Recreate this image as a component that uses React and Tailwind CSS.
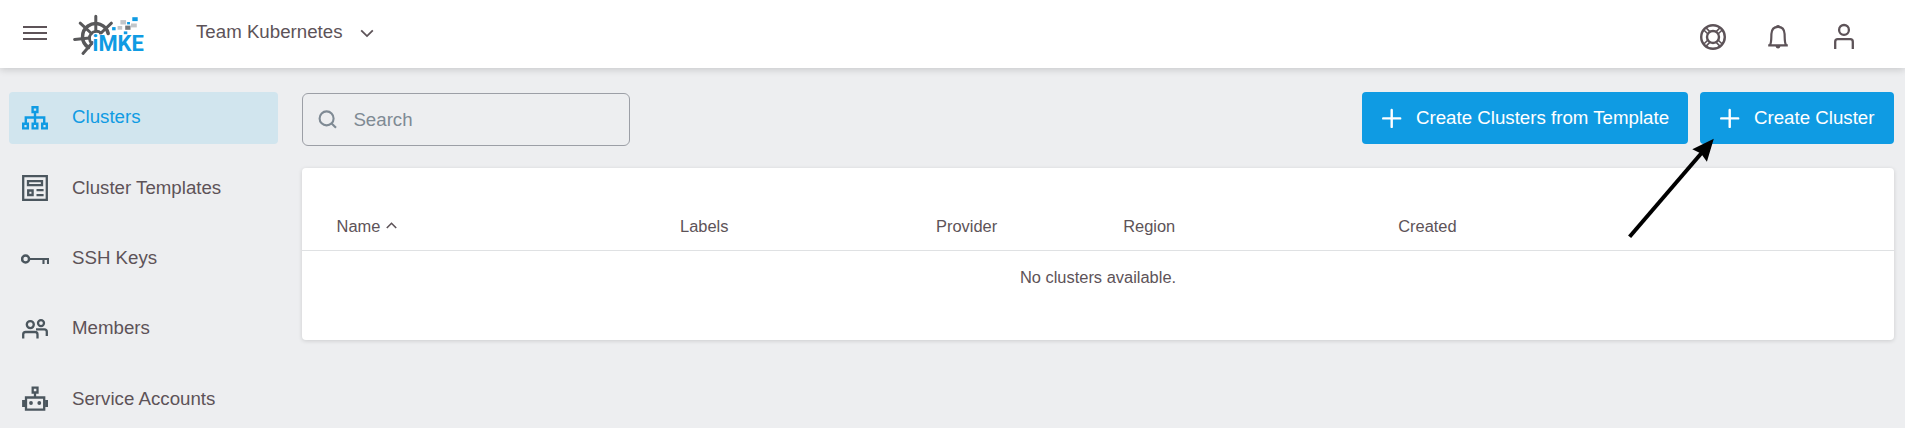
import React from "react";

const stroke = { fill: "none", stroke: "currentColor" };

function HelmLogo() {
  return (
    <svg className="h-[44px] w-[74px] shrink-0" viewBox="72 13 74 44">
      <g fill="none" stroke="#58585a" strokeLinecap="round">
        <path d="M108.2 33.5A13 13 0 1 0 88.5 47.5" strokeWidth="3.5" />
        <path d="M91.8 43.5A6 6 0 1 1 101 33" strokeWidth="2.8" />
        <path
          d="M95.8 16.2V31M80.2 23.2L91.5 33.5M111.4 23.2L100.5 33.5M74.6 39.4L89.5 38M83 53.4L92.5 42.5"
          strokeWidth="3"
        />
      </g>
      <rect x="132.3" y="17.2" width="5.4" height="3.9" fill="#0f9be3" />
      <rect x="120.4" y="20.1" width="5.7" height="4.4" fill="#c3c6c9" />
      <rect x="127.1" y="22" width="2.9" height="2.4" fill="#0f9be3" />
      <rect x="131" y="23.5" width="5.8" height="3.9" fill="#c3c6c9" />
      <rect x="117.6" y="26" width="4.6" height="3.7" fill="#c3c6c9" />
      <rect x="125.2" y="25.6" width="5.3" height="4.2" fill="#77797c" />
      <rect x="112.1" y="27.1" width="3.5" height="3.2" fill="#0f9be3" />
      <rect x="123.8" y="31.4" width="3.5" height="2.8" fill="#0f9be3" />
      <text
        x="92.6"
        y="51"
        textLength="51.2"
        lengthAdjust="spacingAndGlyphs"
        fill="#0f9be3"
        stroke="#fff"
        strokeWidth="1"
        paintOrder="stroke"
        className="font-['Roboto',sans-serif] text-[21.5px] font-bold"
      >
        iMKE
      </text>
    </svg>
  );
}

function ClustersIcon() {
  return (
    <svg className="size-[26px]" viewBox="0 0 26 26" {...stroke} strokeWidth="2.4">
      <path d="M10.6 2.2h4.8v4.8h-4.8zM1.2 18.8h4.6v4.6H1.2zM10.7 18.8h4.6v4.6h-4.6zM20.2 18.8h4.6v4.6h-4.6zM13 7v11.8M3.8 18.8v-6.3h18.4v6.3" />
    </svg>
  );
}

function TemplatesIcon() {
  return (
    <svg className="size-[26px]" viewBox="0 0 26 26" {...stroke} strokeWidth="2.3">
      <path d="M1.2 1.2h23.6v23.6H1.2zM6 6.2h14v4H6zM6.2 15.5h4.4v4.5H6.2zM14.5 15.2H21.6M14.5 20.2H21.6" />
    </svg>
  );
}

function KeyIcon() {
  return (
    <svg className="size-[28px] -mx-px" viewBox="0 0 28 28" {...stroke} strokeWidth="2.1">
      <circle cx="4.6" cy="14" r="3.5" strokeWidth="2.5" />
      <path d="M8.5 14H27v5M22.5 14v5" />
    </svg>
  );
}

function MembersIcon() {
  return (
    <svg className="size-[26px]" viewBox="0 0 26 26" {...stroke} strokeWidth="2.3">
      <circle cx="8.3" cy="8.6" r="3.5" />
      <circle cx="19" cy="7.1" r="3" />
      <path d="M1.2 22.5V18.5Q1.2 16 3.7 16H13Q15.5 16 15.5 18.5V22.5M14 13.3H22.3Q24.8 13.3 24.8 15.8V20" />
    </svg>
  );
}

function RobotIcon() {
  return (
    <svg className="size-[26px]" viewBox="0 0 26 26" {...stroke} strokeWidth="2.3">
      <path d="M10.7 1.7h4.8v4.8h-4.8zM13 6.5v5M4 11.5h18.2v12.2H4z" />
      <path d="M1.6 14v7M24.6 14v7" strokeWidth="3" />
      <circle cx="9" cy="17" r="1.9" fill="currentColor" stroke="none" />
      <circle cx="17.3" cy="17" r="1.9" fill="currentColor" stroke="none" />
    </svg>
  );
}

function PlusIcon() {
  return (
    <svg className="size-[20px] shrink-0" viewBox="0 0 20 20" {...stroke} strokeWidth="2.4">
      <path d="M1.2 10.4H18.2M9.7 2V19" strokeLinecap="round" />
    </svg>
  );
}

const navItems = [
  { label: "Clusters", Icon: ClustersIcon, active: true },
  { label: "Cluster Templates", Icon: TemplatesIcon },
  { label: "SSH Keys", Icon: KeyIcon },
  { label: "Members", Icon: MembersIcon },
  { label: "Service Accounts", Icon: RobotIcon },
];

function Header() {
  return (
    <header className="relative z-10 flex h-[68px] shrink-0 items-start bg-white pr-[47px] shadow-[0_2px_7px_rgba(0,0,0,0.15)]">
      <svg className="mt-[25px] ml-[23px] h-[16px] w-[24px] shrink-0" viewBox="0 0 24 16" {...stroke} strokeWidth="2.2">
        <path d="M0 2H24M0 8H24M0 14H24" />
      </svg>
      <div className="mt-[13px] ml-[25px]">
        <HelmLogo />
      </div>
      <button className="mt-[18px] ml-[50px] flex h-[28px] items-center">
        <span className="w-[148px] text-left">Team Kubernetes</span>
        <svg className="mt-[2px] ml-[16px] h-[9px] w-[14px]" viewBox="0 0 14 9" {...stroke} strokeWidth="1.8">
          <path d="M1.2 1.3L7 7.1L12.8 1.3" />
        </svg>
      </button>
      <div className="mt-[23px] ml-auto flex items-center">
        <svg className="size-[28px]" viewBox="0 0 28 28" {...stroke} strokeWidth="2.4">
          <circle cx="14" cy="14" r="11.8" />
          <circle cx="14" cy="14" r="6" />
          <path d="M6.6 4.4L10.8 8.6M4.6 6.8L8.7 10.8M21.4 4.4L17.2 8.6M23.4 6.8L19.3 10.8M6.6 23.6L10.8 19.4M4.6 21.2L8.7 17.2M21.4 23.6L17.2 19.4M23.4 21.2L19.3 17.2" strokeWidth="1.6" />
        </svg>
        <svg className="ml-[37px] size-[28px]" viewBox="0 0 28 28" {...stroke} strokeWidth="2.2">
          <path d="M4.2 22.3H23.8M6 22C7.6 19.5 7.2 15 7.4 11C7.6 6.3 10 3.8 14 3.8S20.4 6.3 20.6 11C20.8 15 20.4 19.5 22 22" />
          <path d="M11.5 3.8Q12 2 14 2T16.5 3.8zM11.5 23Q12 25.6 14 25.6T16.5 23z" fill="currentColor" stroke="none" />
        </svg>
        <svg className="ml-[38px] size-[28px]" viewBox="0 0 28 28" {...stroke} strokeWidth="2.3">
          <circle cx="14" cy="6.9" r="4.9" />
          <path d="M5.2 26V18.8Q5.2 16.2 7.8 16.2H20.2Q22.8 16.2 22.8 18.8V26" />
        </svg>
      </div>
    </header>
  );
}

function Sidebar() {
  return (
    <nav className="mt-[24px] ml-[9px] flex w-[269px] shrink-0 flex-col gap-[18.7px]">
      {navItems.map(({ label, Icon, active }) => (
        <a
          key={label}
          className={
            active
              ? "flex h-[51.7px] shrink-0 items-center rounded-[4px] bg-[#d1e5ee] pl-[13px] text-[#0f9be3]"
              : "flex h-[51.7px] shrink-0 items-center pl-[13px]"
          }
        >
          <span className={active ? "flex" : "flex text-[#4b565e]"}>
            <Icon />
          </span>
          <span className="ml-[24px] pb-[1.1px]">{label}</span>
        </a>
      ))}
    </nav>
  );
}

function ActionButton({ children, className }) {
  return (
    <button
      className={`flex h-[52px] items-center rounded-[4px] bg-[#0f9be3] pl-[20px] whitespace-nowrap text-white ${className}`}
    >
      <PlusIcon />
      <span className="ml-[14px]">{children}</span>
    </button>
  );
}

function ClusterTable() {
  return (
    <section className="mt-[22.4px] h-[172px] rounded-[4px] bg-white text-[16.45px] shadow-[0_1px_4px_rgba(0,0,0,0.14)]">
      <div className="grid h-[83px] grid-cols-[343.4px_256px_187.2px_275px_1fr] items-start border-b border-[#dfe1e3] pt-[46px] pl-[34.6px] leading-[24px]">
        <div className="flex items-center">
          Name
          <svg className="ml-[6px] mb-[2px] h-[7px] w-[11px]" viewBox="0 0 11 7" {...stroke} strokeWidth="1.6">
            <path d="M0.8 6L5.5 1.3L10.2 6" />
          </svg>
        </div>
        <div>Labels</div>
        <div>Provider</div>
        <div>Region</div>
        <div>Created</div>
      </div>
      <div className="pt-[14px] text-center leading-[24px]">No clusters available.</div>
    </section>
  );
}

export default function App() {
  return (
    <div className="relative flex h-[428px] w-[1905px] flex-col overflow-hidden bg-[#edeef0] font-['Liberation_Sans',Arial,sans-serif] text-[18.7px] leading-[28px] text-[#5d5358]">
      <Header />
      <div className="flex min-h-0 flex-1">
        <Sidebar />
        <main className="mt-[24px] ml-[24px] w-[1592px]">
          <div className="flex items-start">
            <div className="mt-[1px] flex h-[53px] w-[328px] items-center rounded-[6px] border border-[#9c9fa6] pl-[15px] text-[#7f8a94]">
              <svg className="size-[19px]" viewBox="0 0 19 19" {...stroke} strokeWidth="2.1">
                <circle cx="8.6" cy="8.4" r="7" />
                <path d="M13.6 13.4L18 17.8" />
              </svg>
              <span className="ml-[16.4px]">Search</span>
            </div>
            <div className="ml-auto flex gap-[12px]">
              <ActionButton className="w-[326px]">Create Clusters from Template</ActionButton>
              <ActionButton className="w-[194px]">Create Cluster</ActionButton>
            </div>
          </div>
          <ClusterTable />
        </main>
      </div>
      <svg className="absolute top-[136px] left-[1626px] z-20 h-[104px] w-[92px]" viewBox="1626 136 92 104">
        <path d="M1629.6 236.8L1702 152.5" stroke="#000" strokeWidth="4" />
        <path d="M1713.8 138.7L1692.3 149.3L1701 153.5L1706.9 161.8Z" />
      </svg>
    </div>
  );
}
